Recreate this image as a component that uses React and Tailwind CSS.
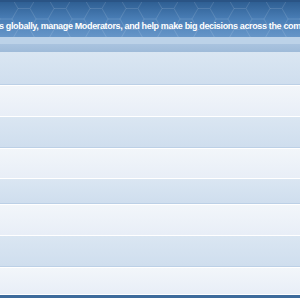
import React from 'react';

const rows = [
  { tone: 'blue', h: 'h-[33px]' },
  { tone: 'white', h: 'h-[32px]' },
  { tone: 'blue', h: 'h-[31px]' },
  { tone: 'white', h: 'h-[31px]' },
  { tone: 'blue', h: 'h-[25px]' },
  { tone: 'white', h: 'h-[32px]' },
  { tone: 'blue', h: 'h-[31px]' },
  { tone: 'white', h: 'h-[28px]' },
];

function HexPattern() {
  return (
    <svg className="absolute inset-0 w-full h-full" aria-hidden="true">
      <defs>
        <pattern id="hex" width="36" height="21" patternUnits="userSpaceOnUse" x="-6" y="-4">
          <path d="M6 0 L18 0 L24 10.5 L18 21 L6 21 L0 10.5 Z" fill="none" stroke="#ffffff" strokeOpacity="0.12" strokeWidth="1" />
          <path d="M24 10.5 L36 10.5" fill="none" stroke="#ffffff" strokeOpacity="0.12" strokeWidth="1" />
        </pattern>
      </defs>
      <rect width="100%" height="100%" fill="url(#hex)" />
    </svg>
  );
}

export default function App() {
  return (
    <div className="w-[300px] h-[300px] overflow-hidden bg-white" style={{ fontFamily: '"Liberation Sans", Arial, sans-serif' }}>
      {/* Category header */}
      <div className="relative h-[37px] bg-gradient-to-b from-[#2f5f93] via-[#4a7fb7] to-[#6796c8] border-t-2 border-[#2a5485] overflow-hidden">
        <HexPattern />
        <div className="relative whitespace-nowrap text-[9px] font-bold text-white leading-none pt-[20px] -ml-[1px] tracking-[-0.35px]">
          s globally, manage Moderators, and help make big decisions across the community.
        </div>
      </div>

      {/* Column headers */}
      <div className="h-[7px] bg-[#bcd2e8]" />
      <div className="h-[8px] bg-gradient-to-b from-[#a9c3df] to-[#9fbbd9]" />

      {/* Rows */}
      <div className="flex flex-col">
        {rows.map((r, i) =>
          r.tone === 'blue' ? (
            <div key={i} className={`${r.h} bg-gradient-to-b from-[#dae6f2] to-[#cfdeee] border-b border-[#bcd0e6]`} />
          ) : (
            <div key={i} className={`${r.h} bg-gradient-to-b from-[#f2f6fa] to-[#e8eef7] border-t border-white border-b border-[#c8d6e8]`} />
          )
        )}
      </div>
      <div className="h-[3px] bg-[#3d6b9c]" />
    </div>
  );
}
